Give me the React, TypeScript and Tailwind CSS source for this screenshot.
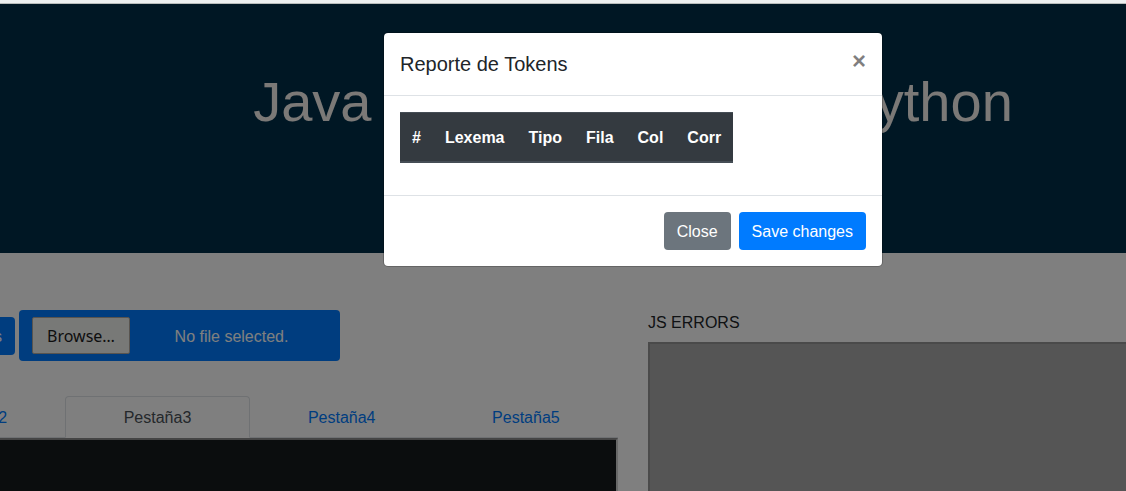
import React, { useState } from "react";

const columns = ["#", "Lexema", "Tipo", "Fila", "Col", "Corr"];
const tabs = ["Pestaña1", "Pestaña2", "Pestaña3", "Pestaña4", "Pestaña5"];

function Toolbar() {
  return (
    <div className="flex items-center gap-1">
      <div className="flex w-[318px] justify-end">
        <button type="button" className="rounded bg-[#007bff] px-[13px] pt-2 pb-1.5 text-white">
          Errores y Tokens
        </button>
      </div>
      <label
        htmlFor="source-file"
        className="flex h-[51px] w-[321px] cursor-pointer items-center rounded bg-[#007bff] px-[13px] text-white"
      >
        <input id="source-file" type="file" className="sr-only" />
        <span className="flex h-[37px] w-[98px] items-center justify-center rounded-[2px] border border-[#b0a99f] bg-[#f1f2ef] font-['Noto_Sans',sans-serif] text-[#1c1c1c]">
          Browse…
        </span>
        <span className="flex-1 pt-0.5 pl-1.5 text-center">No file selected.</span>
      </label>
    </div>
  );
}

function Tabs({ active, onSelect }: { active: string; onSelect: (tab: string) => void }) {
  return (
    <div role="tablist" className="grid grid-cols-5 border-b border-[#dee2e6]">
      {tabs.map((tab) => (
        <button
          key={tab}
          type="button"
          role="tab"
          aria-selected={tab === active}
          onClick={() => onSelect(tab)}
          className={
            tab === active
              ? "-mb-px rounded-t border border-[#dee2e6] border-b-white bg-white pt-[9px] pb-[7px] text-[#495057]"
              : "-mb-px border border-transparent pt-[9px] pb-[7px] text-[#007bff]"
          }
        >
          {tab}
        </button>
      ))}
    </div>
  );
}

function TokensDialog() {
  return (
    <div
      role="dialog"
      aria-labelledby="tokens-title"
      className="w-full max-w-[500px] rounded-[5px] border border-black/20 bg-white bg-clip-padding"
    >
      <div className="flex items-start justify-between border-b border-[#dee2e6] p-4">
        <h5 id="tokens-title" className="text-xl leading-[30px]">
          Reporte de Tokens
        </h5>
        <button type="button" aria-label="Close" className="text-2xl leading-6 font-bold text-black/50">
          ×
        </button>
      </div>
      <div className="p-4 pb-8">
        <table className="border-collapse bg-[#343a40] text-white">
          <thead>
            <tr>
              {columns.map((column) => (
                <th
                  key={column}
                  scope="col"
                  className="border-t border-b-2 border-[#454d55] px-3 pt-[13px] pb-[11px] text-left font-bold"
                >
                  {column}
                </th>
              ))}
            </tr>
          </thead>
        </table>
      </div>
      <div className="flex justify-end gap-2 border-t border-[#dee2e6] p-4">
        <button type="button" className="rounded bg-[#6c757d] px-[13px] pt-2 pb-1.5 text-white">
          Close
        </button>
        <button type="button" className="rounded bg-[#007bff] px-[13px] pt-2 pb-1.5 text-white">
          Save changes
        </button>
      </div>
    </div>
  );
}

export default function App() {
  const [active, setActive] = useState("Pestaña3");

  return (
    <div className="flex h-screen flex-col overflow-hidden bg-white font-['Liberation_Sans',Arial,sans-serif] text-base text-[#212529]">
      <div className="h-1 shrink-0 border-b border-[#b8bcbb] bg-[#eceff0]" />
      <div className="relative -mr-[458px] -ml-[318px] flex flex-1 flex-col">
        <header className="min-h-[249px] bg-[#002e48] px-8 py-16 text-center">
          <h1 className="text-[56px] leading-[67px] text-[#f6f2ee]">Java to JavaScript And Python</h1>
        </header>
        <main className="grid flex-1 grid-cols-2">
          <section className="flex flex-col px-[15px] pt-[57px]">
            <Toolbar />
            <div className="pt-[35px]">
              <Tabs active={active} onSelect={setActive} />
            </div>
            <textarea
              aria-label="Editor"
              className="min-h-96 w-full flex-1 resize-none border-2 border-t-[#8a8a8a] border-r-[#d0d0d0] border-b-[#d0d0d0] border-l-[#8a8a8a] bg-[#171a1d] text-white"
            />
          </section>
          <section className="flex flex-col px-[15px] pt-[58px]">
            <label htmlFor="js-errors" className="pb-[7px]">
              JS ERRORS
            </label>
            <textarea
              id="js-errors"
              readOnly
              className="w-full flex-1 resize-none border-2 border-[#949494] bg-[#aaaaaa]"
            />
          </section>
        </main>
        <div className="absolute inset-0 flex items-start justify-center bg-black/50 pt-7">
          <TokensDialog />
        </div>
      </div>
    </div>
  );
}
